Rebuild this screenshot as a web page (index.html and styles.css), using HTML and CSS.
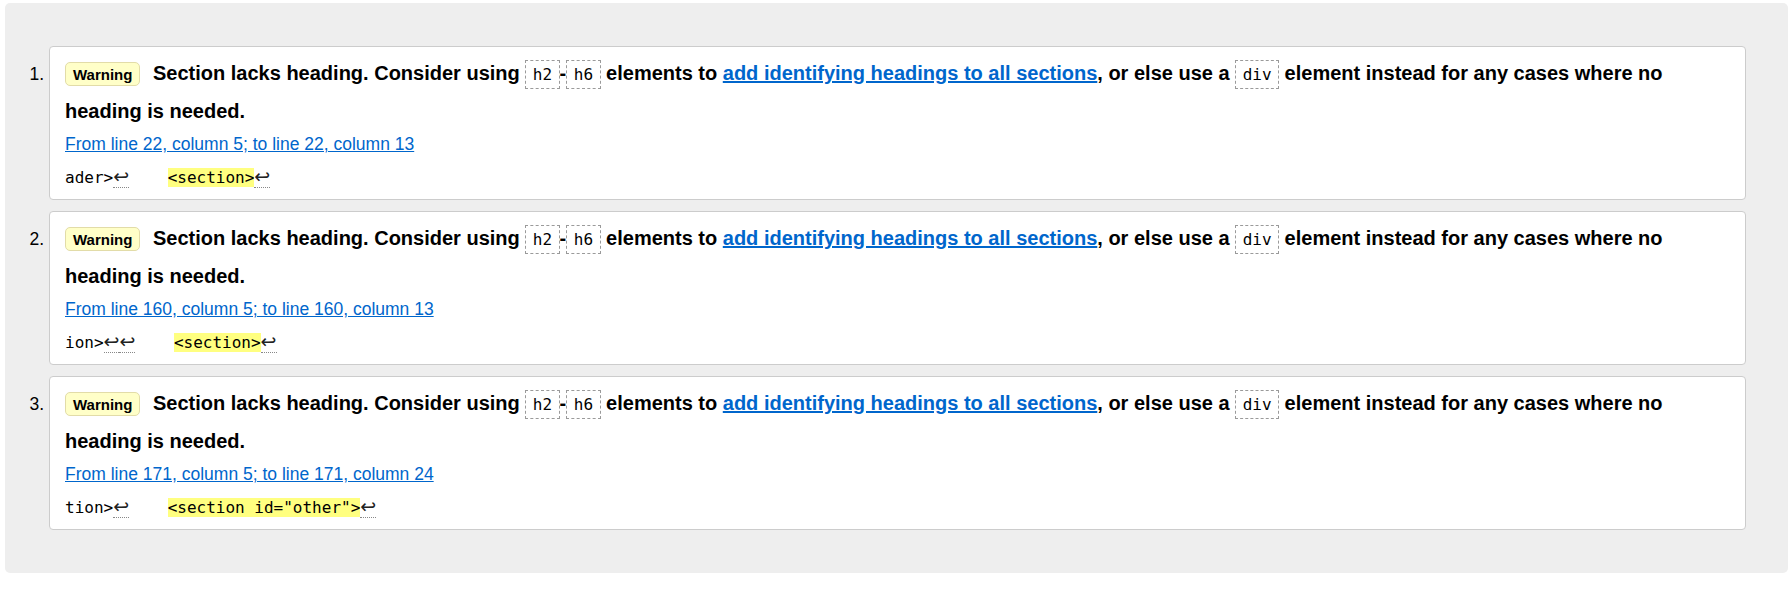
FILE: index.html
```html
<!DOCTYPE html>
<html lang="en">
<head>
<meta charset="utf-8">
<title>Validation messages</title>
<link rel="stylesheet" href="styles.css">
</head>
<body>
<div class="results">
  <ol class="messages">
    <li class="card">
      <p class="msg"><span class="badge">Warning</span> <span>Section lacks heading. Consider using <code class="kw">h2</code>-<code class="kw">h6</code> elements to <a href="#" class="ref">add identifying headings to all sections</a>, or else use a <code class="kw">div</code> element instead for any cases where no heading is needed.</span></p>
      <p class="loc"><a href="#">From line 22, column 5; to line 22, column 13</a></p>
      <p class="extract"><code>ader&gt;<span class="lf">↩</span>    <mark>&lt;section&gt;</mark><span class="lf">↩</span></code></p>
    </li>
    <li class="card">
      <p class="msg"><span class="badge">Warning</span> <span>Section lacks heading. Consider using <code class="kw">h2</code>-<code class="kw">h6</code> elements to <a href="#" class="ref">add identifying headings to all sections</a>, or else use a <code class="kw">div</code> element instead for any cases where no heading is needed.</span></p>
      <p class="loc"><a href="#">From line 160, column 5; to line 160, column 13</a></p>
      <p class="extract"><code>ion&gt;<span class="lf">↩</span><span class="lf">↩</span>    <mark>&lt;section&gt;</mark><span class="lf">↩</span></code></p>
    </li>
    <li class="card">
      <p class="msg"><span class="badge">Warning</span> <span>Section lacks heading. Consider using <code class="kw">h2</code>-<code class="kw">h6</code> elements to <a href="#" class="ref">add identifying headings to all sections</a>, or else use a <code class="kw">div</code> element instead for any cases where no heading is needed.</span></p>
      <p class="loc"><a href="#">From line 171, column 5; to line 171, column 24</a></p>
      <p class="extract"><code>tion&gt;<span class="lf">↩</span>    <mark>&lt;section id="other"&gt;</mark><span class="lf">↩</span></code></p>
    </li>
  </ol>
</div>
</body>
</html>
```

FILE: styles.css
```css
html, body {
  margin: 0;
  padding: 0;
  background: #fff;
}

body {
  font-family: "Liberation Sans", Arial, sans-serif;
  color: #000;
}

.results {
  margin: 3px 1px 0 5px;
  padding: 43px 42px 43px 44px;
  background: #eee;
  border-radius: 5px;
}

.messages {
  margin: 0;
  padding: 0;
  list-style: decimal outside;
}

.card {
  background: #fff;
  border: 1px solid #ccc;
  border-radius: 4px;
  padding: 8px 15px 7px;
  font-size: 17.5px;
}

.card + .card {
  margin-top: 11px;
}

.msg {
  margin: 0;
  font-size: 20px;
  font-weight: bold;
  line-height: 37.5px;
}

.badge {
  display: inline-block;
  font-size: 15px;
  line-height: 17px;
  padding: 3px 7px 2px;
  border: 1px solid #e2dca8;
  background: #ffffc8;
  border-radius: 5px;
  margin-right: 7px;
}

.kw {
  display: inline-block;
  font-family: "DejaVu Sans Mono", "Liberation Mono", monospace;
  font-weight: normal;
  font-size: 16px;
  line-height: 19px;
  padding: 4px 6.5px;
  border: 1px dashed #9a9a9a;
}

a {
  color: #0066cc;
  text-decoration: underline;
}

.loc {
  margin: 0;
  line-height: 28px;
}

.extract {
  margin: 6px 0 0;
  height: 28px;
  line-height: 28px;
  font-size: 16px;
  white-space: pre;
}

.extract code {
  font-family: "DejaVu Sans Mono", "Liberation Mono", monospace;
  font-size: 16px;
}

.extract mark {
  background: #ffff80;
  color: inherit;
}

.lf {
  font-family: "DejaVu Sans", sans-serif;
  font-size: 19px;
  line-height: 0;
  color: #222;
  border-bottom: 1px dotted #888;
}
```
